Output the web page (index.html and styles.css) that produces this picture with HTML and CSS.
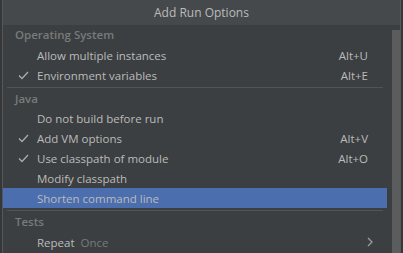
FILE: index.html
```html
<!DOCTYPE html>
<html>
<head>
<meta charset="utf-8">
<link rel="stylesheet" href="styles.css">
</head>
<body>
<div class="popup">
  <div class="title">Add Run Options</div>
  <div class="body">
    <div class="list">
      <div class="group">Operating System</div>
      <div class="item"><span class="check"></span><span class="label">Allow multiple instances</span><span class="key">Alt+U</span></div>
      <div class="item"><span class="check"><svg width="11" height="9" viewBox="0 0 11 9"><polyline points="1,4.5 4,7.5 10,1" fill="none" stroke="#a9abad" stroke-width="1.3"/></svg></span><span class="label">Environment variables</span><span class="key">Alt+E</span></div>
      <div class="sep"></div>
      <div class="group short">Java</div>
      <div class="item"><span class="check"></span><span class="label">Do not build before run</span></div>
      <div class="item"><span class="check"><svg width="11" height="9" viewBox="0 0 11 9"><polyline points="1,4.5 4,7.5 10,1" fill="none" stroke="#a9abad" stroke-width="1.3"/></svg></span><span class="label">Add VM options</span><span class="key">Alt+V</span></div>
      <div class="item"><span class="check"><svg width="11" height="9" viewBox="0 0 11 9"><polyline points="1,4.5 4,7.5 10,1" fill="none" stroke="#a9abad" stroke-width="1.3"/></svg></span><span class="label">Use classpath of module</span><span class="key">Alt+O</span></div>
      <div class="item"><span class="check"></span><span class="label">Modify classpath</span></div>
      <div class="item selected"><span class="check"></span><span class="label">Shorten command line</span></div>
      <div class="sep"></div>
      <div class="group">Tests</div>
      <div class="item"><span class="check"></span><span class="label">Repeat</span><span class="hint">Once</span><span class="arrow"><svg width="6" height="10" viewBox="0 0 6 10"><polyline points="1,1 5,5 1,9" fill="none" stroke="#9a9c9e" stroke-width="1.3"/></svg></span></div>
    </div>
    <div class="scrollbar"><div class="thumb"></div></div>
  </div>
</div>
</body>
</html>
```
FILE: styles.css
```css
html, body {
  margin: 0;
  padding: 0;
  background: #353739;
  height: 253px;
  overflow: hidden;
}
body {
  font-family: "Open Sans", "Noto Sans", sans-serif;
  font-size: 11.5px;
  color: #bbbbbb;
}
.popup {
  margin-left: 2px;
  width: 397px;
  border-left: 1px solid #555759;
  border-right: 1px solid #555759;
  height: 253px;
  background: #3c3f41;
  display: flex;
  flex-direction: column;
}
.title {
  height: 25px;
  line-height: 25px;
  background: #46494b;
  text-align: center;
  color: #bbbbbb;
  font-size: 12px;
}
.body {
  display: flex;
  flex: 1;
  min-height: 0;
}
.list {
  flex: 1;
  padding-right: 5px;
}
.group {
  height: 20px;
  line-height: 20px;
  padding-left: 12px;
  color: #787a7c;
  font-weight: 600;
}
.group.short {
  height: 19px;
  line-height: 19px;
}
.item {
  height: 20px;
  display: flex;
  align-items: center;
  padding-left: 15px;
  padding-right: 19px;
}
.item.selected {
  background: #4b6eaf;
}
.check {
  width: 19px;
  height: 20px;
  display: flex;
  align-items: center;
}
.label {
  white-space: nowrap;
}
.hint {
  margin-left: 6px;
  color: #787a7c;
}
.key {
  margin-left: auto;
}
.arrow {
  margin-left: auto;
  margin-right: -5px;
  display: flex;
  align-items: center;
}
.sep {
  height: 1px;
  background: #515355;
  margin: 2px 4px 1px 4px;
}
.scrollbar {
  width: 8px;
  padding-top: 5px;
}
.thumb {
  height: 100%;
  background: #5a5c5e;
}
```
